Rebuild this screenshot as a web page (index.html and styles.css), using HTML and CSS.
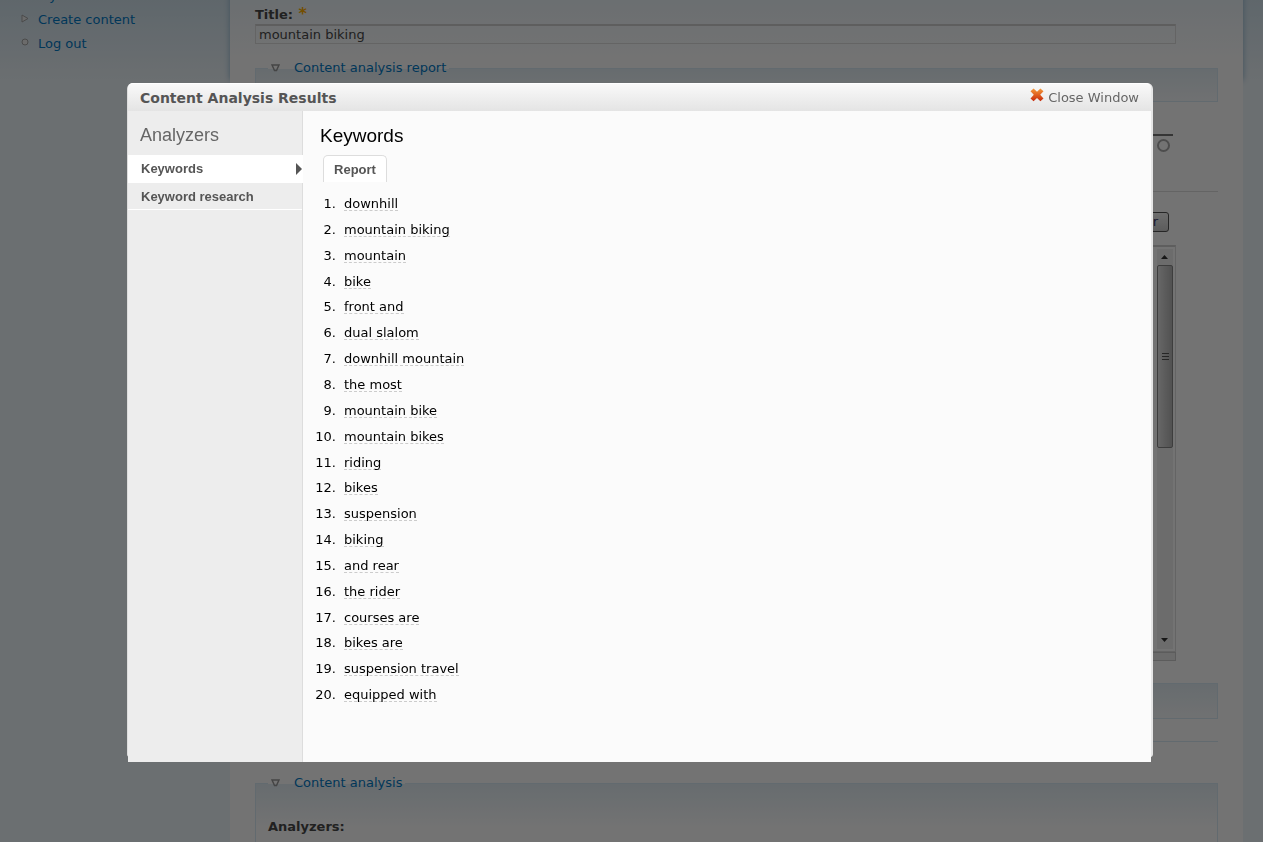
FILE: index.html
```html
<!DOCTYPE html>
<html lang="en">
<head>
  <meta charset="UTF-8">
  <meta name="viewport" content="width=device-width, initial-scale=1.0">
  <title>Content Analysis Results</title>
  <link rel="stylesheet" href="styles.css">
</head>
<body>
  <div class="page">
    <nav class="sidebar">
      <ul class="menu">
        <li><a href="#">My account</a></li>
        <li>
          <svg width="8" height="9" viewBox="0 0 8 9"><path d="M1 1 L7 4.5 L1 8 Z"/></svg>
          <a href="#">Create content</a>
        </li>
        <li>
          <svg width="8" height="9" viewBox="0 0 8 9"><circle cx="4" cy="4" r="3"/></svg>
          <a href="#">Log out</a>
        </li>
      </ul>
    </nav>
    <main class="content">
      <form>
        <label class="field-label" for="title">Title: <span class="required">*</span></label>
        <input class="title-input" type="text" id="title" value="mountain biking">
        <fieldset class="report">
          <legend>
            <svg width="9" height="8" viewBox="0 0 9 8"><path d="M1 1 H8 L5.5 6.5 H3.5 Z"/></svg>
            <a href="#">Content analysis report</a>
          </legend>
        </fieldset>
        <div class="toolbar"><span class="ring"></span></div>
        <div class="split">
          <button type="button">Split summary at cursor</button>
        </div>
        <div class="editor">
          <textarea aria-label="Body"></textarea>
          <div class="scrollbar">
            <svg width="15" height="16" viewBox="0 0 15 16"><path d="M4 10 L7.5 6 L11 10 Z"/></svg>
            <div class="thumb"><i></i><i></i><i></i></div>
            <svg class="down" width="15" height="16" viewBox="0 0 15 16"><path d="M4 5 L7.5 9 L11 5 Z"/></svg>
          </div>
        </div>
        <div class="grippie"></div>
        <fieldset class="closed"></fieldset>
        <hr>
        <fieldset class="analysis">
          <legend>
            <svg width="9" height="8" viewBox="0 0 9 8"><path d="M1 1 H8 L5.5 6.5 H3.5 Z"/></svg>
            <a href="#">Content analysis</a>
          </legend>
          <b>Analyzers:</b>
        </fieldset>
      </form>
    </main>
  </div>

  <div class="modal-bg">
    <div class="modal" role="dialog" aria-labelledby="modalTitle">
      <div class="modal-header">
        <h1 id="modalTitle">Content Analysis Results</h1>
        <a class="close" href="#">
          <svg width="14" height="14" viewBox="0 0 14 14">
            <defs>
              <linearGradient id="cross" x1="0" y1="0" x2="0" y2="1">
                <stop offset="0" stop-color="#f39a3c"/>
                <stop offset="0.5" stop-color="#e0601f"/>
                <stop offset="1" stop-color="#c5290c"/>
              </linearGradient>
            </defs>
            <path fill="url(#cross)" d="M3.6 0.5 L7 3.8 L10.4 0.5 L13.5 3.2 L10.2 6.8 L13.5 10.4 L10.4 13.2 L7 10 L3.6 13.2 L0.5 10.4 L3.8 6.8 L0.5 3.2 Z"/>
          </svg>
          Close Window
        </a>
      </div>
      <div class="modal-body">
        <div class="analyzers">
          <h2>Analyzers</h2>
          <a class="analyzer active" href="#">Keywords</a>
          <a class="analyzer" href="#">Keyword research</a>
        </div>
        <div class="results">
          <h2>Keywords</h2>
          <a class="tab" href="#">Report</a>
          <ol class="keywords">
            <li><a href="#">downhill</a></li>
            <li><a href="#">mountain biking</a></li>
            <li><a href="#">mountain</a></li>
            <li><a href="#">bike</a></li>
            <li><a href="#">front and</a></li>
            <li><a href="#">dual slalom</a></li>
            <li><a href="#">downhill mountain</a></li>
            <li><a href="#">the most</a></li>
            <li><a href="#">mountain bike</a></li>
            <li><a href="#">mountain bikes</a></li>
            <li><a href="#">riding</a></li>
            <li><a href="#">bikes</a></li>
            <li><a href="#">suspension</a></li>
            <li><a href="#">biking</a></li>
            <li><a href="#">and rear</a></li>
            <li><a href="#">the rider</a></li>
            <li><a href="#">courses are</a></li>
            <li><a href="#">bikes are</a></li>
            <li><a href="#">suspension travel</a></li>
            <li><a href="#">equipped with</a></li>
          </ol>
        </div>
      </div>
    </div>
  </div>
</body>
</html>
```
FILE: styles.css
```css
* { box-sizing: border-box; }
body { margin: 0; font: 13px/20px Verdana, "DejaVu Sans", sans-serif; color: #494949; height: 100vh; overflow: hidden; background: #edf5fa linear-gradient(#d3e4ee, #edf5fa) no-repeat 0 0 / 100% 80px; }
a { color: #027ac6; text-decoration: none; }

/* page behind the dialog */
.page { display: flex; height: 100vh; overflow: hidden; padding-right: 20px; }
.sidebar { width: 230px; flex: none; }
.menu { list-style: none; margin: -16px 0 0; padding: 0 0 0 20px; }
.menu li { display: flex; align-items: center; height: 24px; gap: 9px; padding-left: 1px; }
.menu li:first-child { padding-left: 18px; }
.menu svg { fill: #eee; stroke: #a4a4a4; margin-bottom: 4px; }
.content { flex: 1; padding: 5px 25px 0; background: #fff linear-gradient(#edf5fa, #fff) no-repeat 0 0 / 100% 60px; box-shadow: 0 calc(80px - 100vh) 6px #8fb4cc; }
.field-label { display: block; height: 19px; font-weight: bold; }
.required { margin-left: 1px; font-size: 16px; line-height: 16px; color: #ffae00; }
.title-input { display: block; width: calc(100% - 42px); height: 20px; padding: 0 3px; border: 1px solid #ddd; border-top: 2px solid #d0d0d0; background: transparent; font: inherit; color: #494949; }
fieldset { margin: 0; padding: 0 12px; border: 1px solid #d9eaf5; background: linear-gradient(#e4eff6, #fff) no-repeat 0 0 / 100% 44px; }
legend { display: flex; align-items: center; gap: 14px; height: 20px; padding: 0 3px; }
legend svg { fill: none; stroke: #999; stroke-width: 1.5; }
.report { height: 44px; margin-top: 14px; }
.toolbar { display: flex; justify-content: flex-end; align-items: center; height: 20px; margin: 32px 45px 0 0; padding-right: 3px; border-top: 2px solid #777; }
.ring { width: 13px; height: 13px; border: 2px solid #aaa; border-radius: 50%; }
.split { display: flex; justify-content: flex-end; margin-top: 37px; padding: 20px 49px 13px 0; border-top: 1px solid #ddd; }
.split button { height: 20px; padding: 0 10px; border: 1px solid #555; border-radius: 3px; background: linear-gradient(#f4f4f4, #ccc); font: inherit; line-height: 16px; color: #336; }
.editor { display: flex; height: 407px; margin-right: 42px; padding: 2px; border: 1px solid #ddd; border-top: 2px solid #d0d0d0; }
.editor textarea { flex: 1; border: 0; resize: none; background: none; }
.scrollbar { display: flex; flex-direction: column; width: 16px; background: #f0f0f0; }
.scrollbar svg { fill: #333; flex: none; }
.scrollbar .down { margin-top: auto; }
.thumb { height: 183px; display: flex; flex-direction: column; align-items: center; justify-content: center; gap: 2px; border: 1px solid #888; border-radius: 2px; background: linear-gradient(90deg, #e4e4e4, #b4b4b4); }
.thumb i { width: 7px; height: 1px; background: #555; }
.grippie { height: 9px; margin-right: 42px; border: 1px solid #ccc; background: #eee; }
.closed { height: 36px; margin-top: 22px; }
hr { margin: 22px 0 31px; border: 0; border-top: 1px solid #d9eaf5; }
.analysis { height: 120px; }
.analysis b { display: block; margin-top: 24px; }

/* dialog */
.modal-bg { position: fixed; inset: 0; padding: 83px 110px 80px 127px; background: rgba(0,0,0,0.55); }
.modal { display: flex; flex-direction: column; height: 674px; border-left: 1px solid #ddd; border-right: 2px solid #e6e6e6; border-radius: 6px 6px 3px 3px; background: #ededed; }
.modal-header { flex: none; display: flex; align-items: center; justify-content: space-between; height: 28px; padding: 1px 12px 0; border-top: 1px solid #fff; border-radius: 5px 5px 0 0; background: linear-gradient(#f9f9f9, #e4e4e4); }
.modal-header h1 { margin: 0; font-size: 14px; color: #555; }
.close { display: flex; gap: 4px; color: #666; }
.modal-body { display: flex; flex: 1 0 auto; height: 651px; background: #fbfbfb; }
.modal h2 { margin: 0; font: 18px/20px "Liberation Sans", Arial, sans-serif; }
.analyzers { width: 175px; padding-top: 14px; border-right: 1px solid #ddd; background: #ededed; }
.analyzers h2 { margin: 0 12px 10px; color: #666; }
.analyzer { display: block; height: 27px; padding-left: 13px; border-bottom: 1px solid #fff; font: bold 13px/28px "Liberation Sans", Arial, sans-serif; color: #555; }
.analyzer.active { display: flex; align-items: center; justify-content: space-between; height: 28px; margin-right: -1px; background: #fff; }
.analyzer.active::after { content: ""; border: 6px solid transparent; border-left-color: #555; border-right: 0; margin-right: 1px; }
.results { flex: 1; padding: 15px 17px; }
.modal .results h2 { font-size: 19px; color: #000; }
.tab { display: block; width: 64px; height: 27px; margin: 9px 0 10px 3px; border: 1px solid #ddd; border-bottom: 0; border-radius: 5px 5px 0 0; background: #fff; text-align: center; font: bold 13px/27px "Liberation Sans", Arial, sans-serif; color: #555; }
.keywords { display: grid; grid-auto-rows: 1fr; height: 517px; margin: 0; padding-left: 20px; line-height: 24px; color: #000; }
.keywords a { display: inline-block; margin-left: 4px; border-bottom: 1px dashed #ccc; line-height: 12px; color: #000; }
```
